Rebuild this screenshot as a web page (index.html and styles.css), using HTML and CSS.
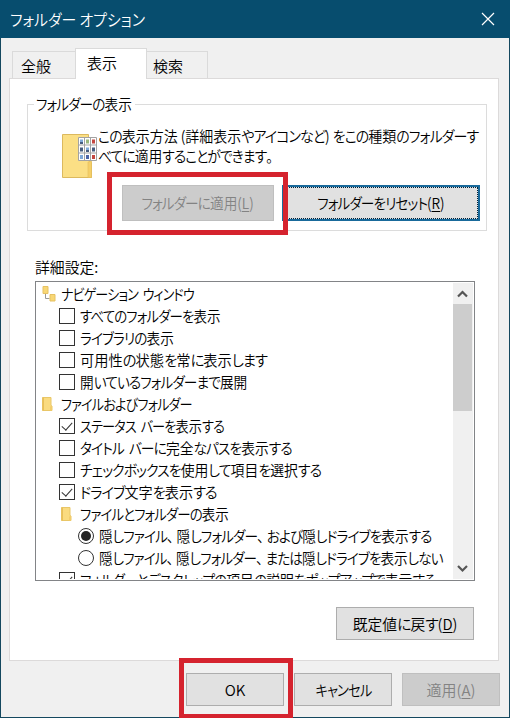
FILE: index.html
```
<!DOCTYPE html>
<html lang="ja">
<head>
<meta charset="utf-8">
<title>フォルダー オプション</title>
<link rel="stylesheet" href="styles.css">
</head>
<body>
<svg class="defs" width="0" height="0">
  <symbol id="folder" viewBox="0 0 12 14">
    <path d="M.5 .5h8.500v8l1 .5v4.500h-9.500z" fill="#fadb80" stroke="#e9c768"/>
    <path d="M8 9.500l2-.5v4.500H8z" fill="#f3cd6b"/>
    <path d="M.5 .5h1.500v13H.5z" fill="#e9bf59"/>
  </symbol>
</svg>
<div class="window">
  <header class="titlebar">
    <h1 class="t title">フォルダー オプション</h1>
    <svg class="close" width="14" height="14" viewBox="0 0 14 14"><path d="M1 1l12 12M13 1L1 13" stroke="#fff" stroke-width="1.200" fill="none"/></svg>
  </header>
  <main class="content">
    <nav class="tabs">
      <div class="tab general">全般</div>
      <div class="tab active">表示</div>
      <div class="tab search">検索</div>
    </nav>
    <section class="panel">
      <fieldset class="group">
        <legend><span class="t f91"><span class="k">フォルダーの</span>表示</span></legend>
        <div class="intro">
          <svg class="bigfolder" width="36" height="46" viewBox="0 0 36 46">
            <path d="M.5 1.500h26v26l3 2v15H.5z" fill="#fbdf85" stroke="#dcb95e"/>
            <path d="M26 29l3.500-1v16.500H26z" fill="#f5cf68" stroke="#e3bd5c" stroke-width=".6"/>
            <path d="M16.500 4.500h18v23h-18z" fill="#fff" stroke="#a3a3a3"/>
            <path d="M22.500 4v24M28.500 4v24M16 12h19M16 20h19" stroke="#a3a3a3"/>
            <path d="M18 6.500h3v4h-3zM24 14.500h3v4h-3zM18 22h3v4h-3z" fill="#7ea8d8"/>
            <path d="M18 9h3v2h-3zM24 17h3v2h-3zM18 14.500h3v4h-3zM30 14.500h3v4h-3z" fill="#465c7e"/>
            <path d="M24 6.500h3v4h-3z" fill="#99b77c"/>
            <path d="M30 6.500h3v4h-3zM30 22h3v4h-3z" fill="#c4473f"/>
            <path d="M24 22h3v4h-3z" fill="#4d65a8"/>
          </svg>
          <p><span class="t desc"><span class="k">この</span>表示方法 (詳細表示<span class="k">やアイコンなど</span>) <span class="k">をこの</span>種類<span class="k">のフォルダーす</span></span><br>
          <span class="t desc2"><span class="k">べてに</span>適用<span class="k">することができます</span>。</span></p>
        </div>
        <div class="pair">
          <button class="btn disabled apply-folder"><span class="t f91"><span class="k">フォルダーに</span>適用(<u>L</u>)</span></button>
          <button class="btn focused"><span class="t f91"><span class="k">フォルダーをリセット</span>(<u>R</u>)</span></button>
          <div class="mark mark-folder"></div>
        </div>
      </fieldset>
      <div class="caption"><span class="t f99">詳細設定:</span></div>
      <div class="list">
        <div class="rows">
          <div class="row l0"><svg width="14" height="16" viewBox="0 0 14 16"><path d="M3.500 6v6.500h4" stroke="#999" fill="none"/><path d="M1 .5h5v7H1zM8 8.500h5v6.500H8z" fill="#f8d775" stroke="#e6c163"/></svg><span class="t f87"><span class="k">ナビゲーション ウィンドウ</span></span></div>
          <div class="row l1"><i class="box"></i><span class="t f90"><span class="k">すべてのフォルダーを</span>表示</span></div>
          <div class="row l1"><i class="box"></i><span class="t f91"><span class="k">ライブラリの</span>表示</span></div>
          <div class="row l1"><i class="box"></i><span class="t f95">可用性<span class="k">の</span>状態<span class="k">を</span>常<span class="k">に</span>表示<span class="k">します</span></span></div>
          <div class="row l1"><i class="box"></i><span class="t f91">開<span class="k">いているフォルダーまで</span>展開</span></div>
          <div class="row l0"><svg width="12" height="14"><use href="#folder"/></svg><span class="t f88"><span class="k">ファイルおよびフォルダー</span></span></div>
          <div class="row l1"><i class="box on"></i><span class="t f88"><span class="k">ステータス バーを</span>表示<span class="k">する</span></span></div>
          <div class="row l1"><i class="box"></i><span class="t f92"><span class="k">タイトル バーに</span>完全<span class="k">なパスを</span>表示<span class="k">する</span></span></div>
          <div class="row l1"><i class="box"></i><span class="t f925"><span class="k">チェックボックスを</span>使用<span class="k">して</span>項目<span class="k">を</span>選択<span class="k">する</span></span></div>
          <div class="row l1"><i class="box on"></i><span class="t f94"><span class="k">ドライブ</span>文字<span class="k">を</span>表示<span class="k">する</span></span></div>
          <div class="row l1"><svg width="12" height="14"><use href="#folder"/></svg><span class="t f90"><span class="k">ファイルとフォルダーの</span>表示</span></div>
          <div class="row l2"><i class="radio on"></i><span class="t f91">隠<span class="k">しファイル</span><span class="comma">、</span>隠<span class="k">しフォルダー</span><span class="comma">、</span><span class="k">および</span>隠<span class="k">しドライブを</span>表示<span class="k">する</span></span></div>
          <div class="row l2"><i class="radio"></i><span class="t f905">隠<span class="k">しファイル</span><span class="comma">、</span>隠<span class="k">しフォルダー</span><span class="comma">、</span><span class="k">または</span>隠<span class="k">しドライブを</span>表示<span class="k">しない</span></span></div>
          <div class="row l1"><i class="box on"></i><span class="t f92"><span class="k">フォルダーとデスクトップの</span>項目<span class="k">の</span>説明<span class="k">をポップアップで</span>表示<span class="k">する</span></span></div>
        </div>
        <div class="scrollbar">
          <svg width="20" height="21" viewBox="0 0 20 21"><path d="M5 13.500l4.500-4.500 4.500 4.500" stroke="#555" stroke-width="2.200" fill="none"/></svg>
          <div class="track"><div class="thumb"></div></div>
          <svg width="20" height="21" viewBox="0 0 20 21"><path d="M5 8l4.500 4.500 4.500-4.500" stroke="#555" stroke-width="2.200" fill="none"/></svg>
        </div>
      </div>
      <button class="btn restore"><span class="t f985">既定値<span class="k">に</span>戻<span class="k">す</span>(<u>D</u>)</span></button>
    </section>
    <footer class="actions">
      <button class="btn ok">OK<span class="mark mark-ok"></span></button>
      <button class="btn"><span class="t f89"><span class="k">キャンセル</span></span></button>
      <button class="btn disabled">適用(<u>A</u>)</button>
    </footer>
  </main>
</div>
</body>
</html>
```
FILE: styles.css
```
* { box-sizing: border-box; }

body {
  margin: 0;
  font: 350 15px/20px "Noto Sans CJK JP", sans-serif;
  font-feature-settings: "palt";
  color: #000;
  overflow: hidden;
}

.defs { position: absolute; }

.window {
  width: 510px;
  height: 718px;
  display: flex;
  flex-direction: column;
  border: 1px solid #14485f;
  border-top: 0;
  background: #f0f0f0;
}

.titlebar {
  flex: none;
  height: 38px;
  margin: 0 -1px;
  padding: 0 15px 0 10px;
  display: flex;
  align-items: center;
  justify-content: space-between;
  background: #074d6e;
  color: #fff;
}

.title {
  margin: 0;
  font-size: 16px;
  font-weight: 350;
  --fit: .93;
}

/* Condensed labels: kana set tight, then each label narrowed by its own factor. */
.t {
  display: inline-block;
  white-space: nowrap;
  transform: scaleX(var(--fit, 1));
  transform-origin: left;
}
.btn .t { transform-origin: center; }
.k { letter-spacing: -1px; word-spacing: 3px; }
.comma { letter-spacing: 3px; }
.f87 { --fit: .87; }
.f88 { --fit: .88; }
.f89 { --fit: .889; }
.f90 { --fit: .9; }
.f905 { --fit: .905; }
.f91 { --fit: .911; }
.f92 { --fit: .917; }
.f925 { --fit: .924; }
.f94 { --fit: .942; }
.f95 { --fit: .95; }
.f985 { --fit: .985; }
.f99 { --fit: .988; }
.desc { --fit: .932; }
.desc2 { --fit: .918; }

.content {
  flex: 1;
  display: flex;
  flex-direction: column;
  padding: 10px 9px 0 8px;
}

.tabs {
  display: flex;
  align-items: flex-end;
  height: 30px;
  padding-left: 3px;
}

.tab {
  height: 27px;
  padding-top: 4px;
  border: 1px solid #dadada;
  border-bottom: 0;
}
.general { width: 63px; padding-left: 8px; border-right: 0; }
.search { width: 61px; padding-left: 6px; border-left: 0; }
.active {
  width: 72px;
  height: 31px;
  margin-bottom: -1px;
  padding-left: 11px;
  background: #fff;
  z-index: 1;
}

.panel {
  width: 490px;
  height: 583px;
  padding: 15px 11px 0 17px;
  border: 1px solid #dcdada;
  background: #fff;
  display: flex;
  flex-direction: column;
}

.group {
  height: 137px;
  margin: 0;
  padding: 0 6px 0 34px;
  border: 1px solid #dcdcdc;
}
.group legend {
  width: 101px;
  height: 20px;
  margin-left: -28px;
  padding: 0 2px;
}

.intro { display: flex; height: 53px; padding-top: 12px; }
.intro p { margin: 0; white-space: nowrap; width: 380px; }
.bigfolder { flex: none; margin-top: 7px; }

.pair {
  position: relative;
  display: flex;
  gap: 8px;
  margin: 18px 0 0 60px;
}

.btn {
  display: flex;
  align-items: center;
  justify-content: center;
  width: 98px;
  height: 33px;
  padding: 0;
  border: 1px solid #adadad;
  border-radius: 0;
  background: #e1e1e1;
  color: #000;
  font: inherit;
  font-feature-settings: inherit;
}
.btn u { text-decoration-thickness: 1px; text-underline-offset: 2px; }
.disabled { background: #ccc; border-color: #bfbfbf; color: #838383; }
.pair .btn { height: 36px; flex: none; }
.apply-folder { width: 152px; }
.pair .focused {
  width: 198px;
  border: 2px solid #196a9b;
  outline: 1px dotted #002038;
  outline-offset: -3px;
}

.mark { position: absolute; border: 5px solid #d5232e; }
.mark-folder { left: -15px; top: -13px; width: 181px; height: 63px; }
.mark-ok { left: -8px; top: -16px; width: 114px; height: 61px; }

.caption { height: 20px; margin: 26px 0 0 8px; }

.list {
  display: flex;
  width: 440px;
  height: 300px;
  margin: 4px 0 0 8px;
  padding: 1px;
  border: 1px solid #828487;
}

.rows { flex: 1; overflow: hidden; height: 296px; }
.row {
  display: grid;
  grid-template-columns: 21px 1fr;
  align-items: center;
  height: 22px;
}
.row .t { justify-self: start; }
.l0 { grid-template-columns: 19px 1fr; padding-left: 5px; }
.l1 { padding-left: 22px; }
.l1 svg { margin-left: 2px; }
.l2 { padding-left: 41px; }

.box, .radio {
  position: relative;
  width: 16px;
  height: 16px;
  border: 1px solid #333;
  background: #fff;
}
.radio { border-radius: 50%; }
.box.on::after {
  content: "";
  position: absolute;
  left: 4px;
  top: 1px;
  width: 5px;
  height: 9px;
  border: solid #333;
  border-width: 0 1.500px 1.500px 0;
  transform: rotate(42deg);
}
.radio.on::after {
  content: "";
  position: absolute;
  inset: 2px;
  border-radius: 50%;
  background: #222;
}

.scrollbar {
  width: 20px;
  display: flex;
  flex-direction: column;
  background: #f0f0f0;
}
.scrollbar svg { flex: none; }
.track { flex: 1; }
.thumb { width: 19px; height: 107px; background: #cdcdcd; }

.restore { width: 138px; margin: 26px 0 0 309px; flex: none; }

.actions {
  display: flex;
  justify-content: flex-end;
  gap: 10px;
  margin-top: 12px;
}
.ok { position: relative; }
```
